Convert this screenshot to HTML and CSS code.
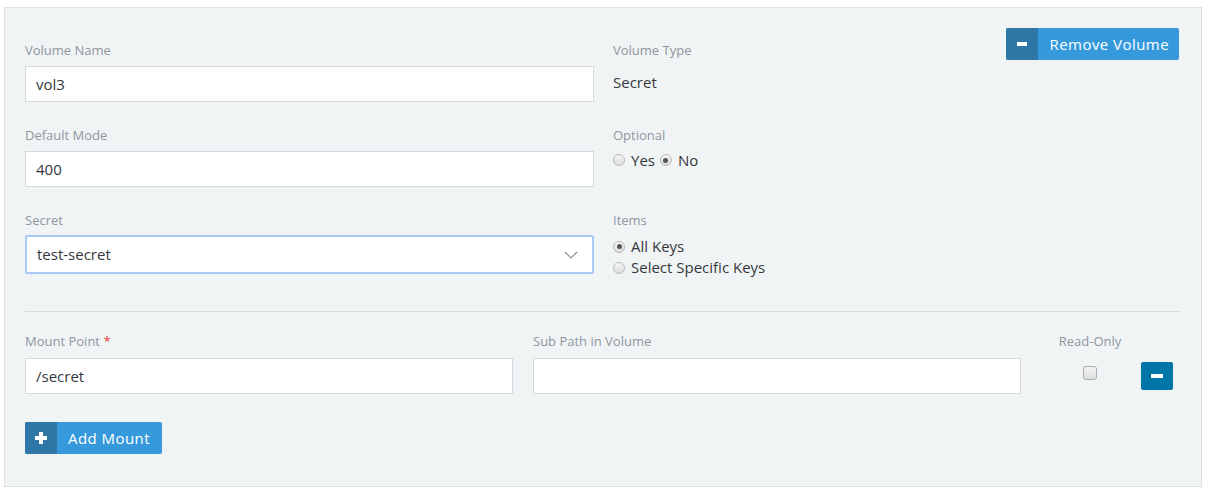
FILE: index.html
```html
<!DOCTYPE html>
<html>
<head>
<meta charset="utf-8">
<link rel="stylesheet" href="styles.css">
</head>
<body>
<div class="volume">
  <div class="top">
    <div class="field">
      <label class="lbl">Volume Name</label>
      <div class="input">vol3</div>
    </div>
    <div class="field">
      <label class="lbl">Volume Type</label>
      <div class="static">Secret</div>
    </div>
    <div class="field">
      <label class="lbl">Default Mode</label>
      <div class="input">400</div>
    </div>
    <div class="field">
      <label class="lbl lbl-opt">Optional</label>
      <div class="radios-inline">
        <span class="radio"></span><span class="rtext">Yes</span>
        <span class="radio on"></span><span class="rtext">No</span>
      </div>
    </div>
    <div class="field">
      <label class="lbl lbl-sec">Secret</label>
      <div class="input select">
        <span>test-secret</span>
        <svg class="chev" width="14" height="8" viewBox="0 0 14 8"><path d="M1 1l6 6 6-6" fill="none" stroke="#8a9199" stroke-width="1.2"/></svg>
      </div>
    </div>
    <div class="field">
      <label class="lbl lbl-items">Items</label>
      <div class="rrow"><span class="radio on"></span><span class="rtext">All Keys</span></div>
      <div class="rrow"><span class="radio"></span><span class="rtext">Select Specific Keys</span></div>
    </div>
    <button class="btn btn-remove"><span class="ico"><span class="minus"></span></span><span class="btxt">Remove Volume</span></button>
  </div>
  <hr class="sep">
  <div class="mounts">
    <div class="field mfield">
      <label class="lbl">Mount Point <span class="req">*</span></label>
      <div class="input">/secret</div>
    </div>
    <div class="field mfield">
      <label class="lbl">Sub Path in Volume</label>
      <div class="input"></div>
    </div>
    <div class="field ro">
      <label class="lbl">Read-Only</label>
      <span class="check"></span>
    </div>
    <div class="del-wrap">
      <button class="btn-del"><span class="minus"></span></button>
    </div>
  </div>
  <button class="btn btn-add"><span class="ico"><span class="plus"></span></span><span class="btxt">Add Mount</span></button>
</div>
</body>
</html>
```

FILE: styles.css
```css
* { box-sizing: border-box; }
body {
  margin: 0;
  padding: 7px 8px 0 4px;
  font-family: "Open Sans", "Liberation Sans", sans-serif;
  background: #fff;
  color: #3c4045;
}
.volume {
  width: 1198px;
  height: 480px;
  background: #f1f4f5;
  border: 1px solid #dde1e4;
  padding: 20px 20px 0 20px;
}
.top {
  position: relative;
  display: grid;
  grid-template-columns: 569px 1fr;
  column-gap: 19px;
  row-gap: 24px;
  align-items: start;
  padding-top: 13px;
}
.lbl {
  display: block;
  font-size: 13px;
  color: #8e979f;
  line-height: 18px;
  height: 18px;
  margin-bottom: 7px;
}
.lbl-opt { margin-bottom: 6px; }
.lbl-sec { margin-bottom: 6px; }
.lbl-items { margin-bottom: 7px; }
.input {
  height: 36px;
  background: #fff;
  border: 1px solid #d3d9dd;
  font-size: 15px;
  line-height: 34px;
  padding: 0 10px;
  color: #34383c;
}
.select {
  height: 39px;
  line-height: 37px;
  border: 2px solid #a8c8f5;
  border-radius: 2px;
  display: flex;
  justify-content: space-between;
  align-items: center;
}
.chev { margin-right: 4px; }
.static {
  font-size: 15px;
  line-height: 20px;
  padding-top: 6px;
  color: #34383c;
}
.radios-inline { display: flex; align-items: center; font-size: 15px; height: 20px; }
.rrow { display: flex; align-items: center; font-size: 15px; line-height: 21px; height: 21px; }
.radio {
  width: 12px; height: 12px;
  border-radius: 50%;
  border: 1px solid #b5b9bd;
  background: linear-gradient(#f6f6f6, #dcdcdc);
  display: inline-block;
  position: relative;
  margin-right: 6px;
}
.radio.on::after {
  content: "";
  position: absolute;
  left: 2.5px; top: 2.5px;
  width: 5px; height: 5px;
  border-radius: 50%;
  background: #555;
}
.rtext { color: #34383c; margin-right: 5px; }
.btn {
  display: flex;
  align-items: stretch;
  border: none;
  padding: 0;
  background: #3599db;
  color: #fff;
  font-family: inherit;
  font-size: 15px;
  height: 32px;
  border-radius: 2px;
  overflow: hidden;
}
.btn .ico {
  width: 32px;
  background: #2e77a7;
  display: flex; align-items: center; justify-content: center;
}
.btn .btxt { padding: 0 10px 0 11px; line-height: 32px; letter-spacing: 0.45px; }
.btn-remove {
  position: absolute;
  right: 2px; top: 0;
}
.minus {
  display: block;
  width: 10px; height: 4px;
  background: #fff;
}
.plus {
  display: block;
  position: relative;
  width: 12px; height: 12px;
}
.plus::before, .plus::after {
  content: ""; position: absolute; background: #fff;
}
.plus::before { left: 0; top: 4px; width: 12px; height: 4px; }
.plus::after { left: 4px; top: 0; width: 4px; height: 12px; }
.sep {
  border: none;
  border-top: 1px solid #d8dde0;
  margin: 33px 1px 20px 0;
}
.mounts {
  display: flex;
  gap: 20px;
  align-items: flex-start;
}
.mfield { width: 488px; }
.mounts .lbl { margin-bottom: 8px; }
.req { color: #e0383e; }
.ro {
  width: 100px;
  margin-left: -1px;
  display: flex; flex-direction: column; align-items: center;
}
.ro .lbl { margin-bottom: 0; }
.check {
  width: 14px; height: 14px;
  margin-top: 16px;
  border: 1px solid #a9adb1;
  border-radius: 3px;
  background: linear-gradient(#f3f3f3, #dedede);
}
.del-wrap { padding-top: 30px; margin-left: -19px; }
.btn-del {
  width: 32px; height: 28px;
  background: #0076a8;
  border: none; border-radius: 2px;
  display: flex; align-items: center; justify-content: center;
  padding: 0;
}
.btn-del .minus { width: 12px; height: 4px; }
.btn-add { margin-top: 28px; }
.btn-add .btxt { padding-right: 12px; }
```
